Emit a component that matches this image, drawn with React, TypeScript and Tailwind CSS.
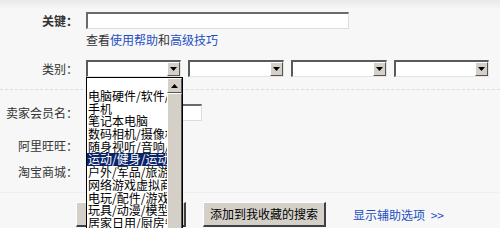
/* ── Taobao advanced search form with open category dropdown ── */

const categories = [
  '',
  '电脑硬件/软件/网络设备',
  '手机',
  '笔记本电脑',
  '数码相机/摄像机/图形冲印',
  '随身视听/音响/耳机',
  '运动/健身/运动明星',
  '户外/军品/旅游/机票',
  '网络游戏虚拟商品',
  '电玩/配件/游戏/攻略',
  '玩具/动漫/模型/卡通',
  '居家日用/厨房餐饮',
  '家用电器/影音设备',
];

const font = { fontFamily: '"Noto Sans CJK SC", "Noto Sans", sans-serif' };

function Arrow({ up = false }: { up?: boolean }) {
  return (
    <svg width="7" height="4" viewBox="0 0 7 4" className="block">
      {up ? <path d="M0 4h7L3.5 0z" fill="#000" /> : <path d="M0 0h7L3.5 4z" fill="#000" />}
    </svg>
  );
}

function Select({ width }: { width: string }) {
  return (
    <div
      className={`flex h-[17px] ${width} border-t-2 border-l-2 border-t-[#5a5a5a] border-l-[#5a5a5a] border-b border-r border-b-[#e4e4e4] border-r-[#e4e4e4] bg-white`}
    >
      <div className="flex-1" />
      <div className="flex w-[13px] items-center justify-center border-t border-l border-white border-b border-r border-b-[#555] border-r-[#555] bg-[#d4d0c8]">
        <Arrow />
      </div>
    </div>
  );
}

function TextInput({ width }: { width: string }) {
  return (
    <div
      className={`h-[17px] ${width} border-t-2 border-l-2 border-t-[#6a6a6a] border-l-[#6a6a6a] border-b border-r border-b-[#dcdcdc] border-r-[#dcdcdc] bg-white`}
    />
  );
}

function Label({ children, bold = false }: { children: string; bold?: boolean }) {
  return (
    <div
      className={`w-[86px] shrink-0 pr-[8px] text-right text-[12px] leading-[17px] text-[#333] ${bold ? 'font-bold' : ''}`}
    >
      {children}
    </div>
  );
}

function Dropdown() {
  return (
    <div className="absolute left-0 top-[17px] z-10 flex h-[180px] w-[97px] border border-black bg-white">
      <div className="min-w-0 flex-1 overflow-hidden">
        {categories.map((c, i) => (
          <div
            key={i}
            className={`whitespace-nowrap pl-[1px] text-[12px] ${
              i === 0 ? 'h-[12px] leading-[12px]' : 'h-[12.7px] leading-[12.7px]'
            } ${i === 6 ? 'bg-[#0a246a] text-white' : 'text-black'}`}
          >
            {c}
          </div>
        ))}
      </div>
      <div className="flex w-[15px] flex-col bg-[#e6e3dc]">
        <div className="flex h-[15px] items-center justify-center border-t border-l border-white border-b border-r border-b-[#555] border-r-[#555] bg-[#d4d0c8]">
          <Arrow up />
        </div>
        <div className="flex-1 border-t border-l border-white border-r border-r-[#555] bg-[#d4d0c8]" />
      </div>
    </div>
  );
}

export default function App() {
  return (
    <div
      className="h-[228px] w-[500px] overflow-hidden bg-[linear-gradient(#e9e9e9,#f7f7f7_9px,#f7f7f7)]"
      style={font}
    >
      <div className="pt-[12px]">
        {/* keyword */}
        <div className="flex items-center">
          <Label bold>关键：</Label>
          <TextInput width="w-[263px]" />
        </div>
        <div className="mt-[3px] pl-[86px] text-[12px] leading-[16px] text-[#333]">
          查看<a className="text-[#1d4fc4]">使用帮助</a>和<a className="text-[#1d4fc4]">高级技巧</a>
        </div>

        {/* category */}
        <div className="mt-[12px] flex items-center">
          <Label>类别：</Label>
          <div className="flex gap-[7px]">
            <div className="relative">
              <Select width="w-[95px]" />
              <Dropdown />
            </div>
            <Select width="w-[96px]" />
            <Select width="w-[96px]" />
            <Select width="w-[95px]" />
          </div>
        </div>

        <div className="mt-[12px] border-t border-dashed border-[#dcdcdc]" />

        {/* seller */}
        <div className="mt-[14px] flex items-center">
          <Label>卖家会员名：</Label>
          <TextInput width="w-[116px]" />
        </div>
        <div className="mt-[16px] flex items-center">
          <Label>阿里旺旺：</Label>
          <TextInput width="w-[90px]" />
        </div>
        <div className="mt-[9px] flex items-center">
          <Label>淘宝商城：</Label>
          <div className="h-[13px] w-[13px] border border-[#777] bg-white" />
        </div>

        <div className="mt-[12px] border-t border-[#efefef]" />

        {/* actions */}
        <div className="mt-[9px] flex items-center">
          <button className="ml-[76px] h-[25px] w-[110px] border-t border-l border-white border-b-2 border-r-2 border-b-[#404040] border-r-[#404040] bg-[#d4d0c8] text-[12px] text-black">
            搜索
          </button>
          <button className="ml-[17px] h-[25px] w-[123px] border-t border-l border-white border-b-2 border-r-2 border-b-[#404040] border-r-[#404040] bg-[#d4d0c8] text-[12px] text-black">
            添加到我收藏的搜索
          </button>
          <a className="ml-[27px] text-[12px] text-[#1d4fc4]">
            显示辅助选项 <span className="ml-[3px]">&gt;&gt;</span>
          </a>
        </div>
      </div>
    </div>
  );
}
